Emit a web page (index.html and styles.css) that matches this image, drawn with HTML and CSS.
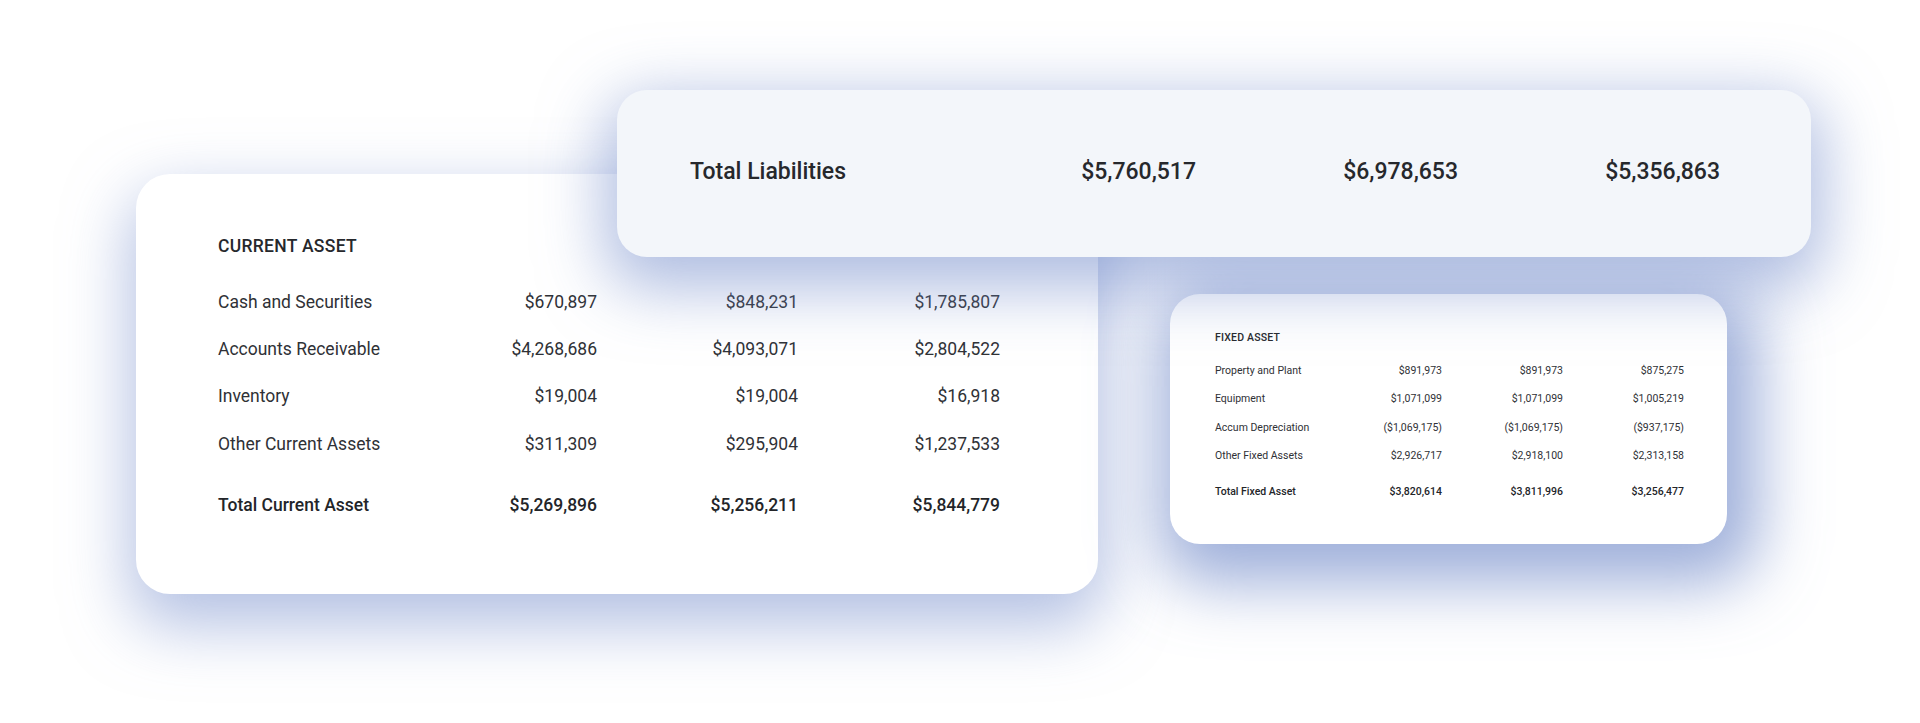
FILE: index.html
```html
<!DOCTYPE html>
<html lang="en">
<head>
<meta charset="utf-8">
<title>Balance Sheet Cards</title>
<link rel="stylesheet" href="styles.css">
</head>
<body>
<main class="stage">
  <section class="card card-current">
    <h2 class="section-title">CURRENT ASSET</h2>
    <div class="rows">
      <div class="row"><span class="label">Cash and Securities</span><span class="val">$670,897</span><span class="val">$848,231</span><span class="val">$1,785,807</span></div>
      <div class="row"><span class="label">Accounts Receivable</span><span class="val">$4,268,686</span><span class="val">$4,093,071</span><span class="val">$2,804,522</span></div>
      <div class="row"><span class="label">Inventory</span><span class="val">$19,004</span><span class="val">$19,004</span><span class="val">$16,918</span></div>
      <div class="row"><span class="label">Other Current Assets</span><span class="val">$311,309</span><span class="val">$295,904</span><span class="val">$1,237,533</span></div>
      <div class="row total"><span class="label">Total Current Asset</span><span class="val">$5,269,896</span><span class="val">$5,256,211</span><span class="val">$5,844,779</span></div>
    </div>
  </section>

  <section class="card card-fixed">
    <h2 class="section-title">FIXED ASSET</h2>
    <div class="rows">
      <div class="row"><span class="label">Property and Plant</span><span class="val">$891,973</span><span class="val">$891,973</span><span class="val">$875,275</span></div>
      <div class="row"><span class="label">Equipment</span><span class="val">$1,071,099</span><span class="val">$1,071,099</span><span class="val">$1,005,219</span></div>
      <div class="row"><span class="label">Accum Depreciation</span><span class="val">($1,069,175)</span><span class="val">($1,069,175)</span><span class="val">($937,175)</span></div>
      <div class="row"><span class="label">Other Fixed Assets</span><span class="val">$2,926,717</span><span class="val">$2,918,100</span><span class="val">$2,313,158</span></div>
      <div class="row total"><span class="label">Total Fixed Asset</span><span class="val">$3,820,614</span><span class="val">$3,811,996</span><span class="val">$3,256,477</span></div>
    </div>
  </section>

  <section class="card card-liab">
    <div class="row liab-row"><span class="label">Total Liabilities</span><span class="val">$5,760,517</span><span class="val">$6,978,653</span><span class="val">$5,356,863</span></div>
  </section>
</main>
</body>
</html>
```

FILE: styles.css
```css
* { box-sizing: border-box; }

html, body {
  margin: 0;
  padding: 0;
  background: #ffffff;
}

body {
  font-family: Roboto, "Liberation Sans", Arial, sans-serif;
  color: #2f3136;
  width: 1920px;
  height: 723px;
  overflow: hidden;
}

.stage {
  position: relative;
  width: 1920px;
  height: 723px;
  overflow: hidden;
}

.card {
  position: absolute;
  background: #ffffff;
}

.section-title {
  margin: 0;
  font-weight: 500;
  color: #26282c;
}

.row {
  display: grid;
  align-items: center;
}

.val { text-align: right; }

.total { font-weight: 500; color: #232529; }

/* Current asset card */
.card-current {
  left: 136px;
  top: 174px;
  width: 962px;
  height: 420px;
  border-radius: 34px;
  padding: 60px 98px 0 82px;
  z-index: 1;
  box-shadow: 0 26px 64px 6px rgba(118, 142, 204, 0.55);
}

.card-current .section-title {
  font-size: 17.5px;
  line-height: 24px;
  letter-spacing: 0.3px;
  margin-bottom: 20px;
}

.card-current .row {
  grid-template-columns: 200px 179px 201px 202px;
  height: 47.3px;
  font-size: 17.5px;
  line-height: 24px;
}

.card-current .row.total { margin-top: 14px; }

/* Fixed asset card */
.card-fixed {
  left: 1170px;
  top: 294px;
  width: 557px;
  height: 250px;
  border-radius: 30px;
  padding: 37px 43px 0 45px;
  z-index: 2;
  box-shadow: 10px 18px 64px 22px rgba(112, 137, 200, 0.68);
}

.card-fixed .section-title {
  font-size: 10.5px;
  line-height: 14px;
  letter-spacing: 0.2px;
  margin-bottom: 12px;
}

.card-fixed .row {
  grid-template-columns: 106px 121px 121px 121px;
  height: 28.3px;
  font-size: 10.5px;
  line-height: 14px;
}

.card-fixed .row.total { margin-top: 8px; }

/* Total liabilities card */
.card-liab {
  left: 617px;
  top: 90px;
  width: 1194px;
  height: 167px;
  border-radius: 30px;
  background: #f3f6fa;
  padding: 0 91px 3px 73px;
  display: flex;
  align-items: center;
  z-index: 3;
  box-shadow: 0 20px 64px 12px rgba(118, 142, 204, 0.58);
}

.liab-row {
  grid-template-columns: 244px 262px 262px 262px;
  font-size: 23px;
  line-height: 30px;
  font-weight: 500;
  color: #26282c;
  width: 100%;
}
```
